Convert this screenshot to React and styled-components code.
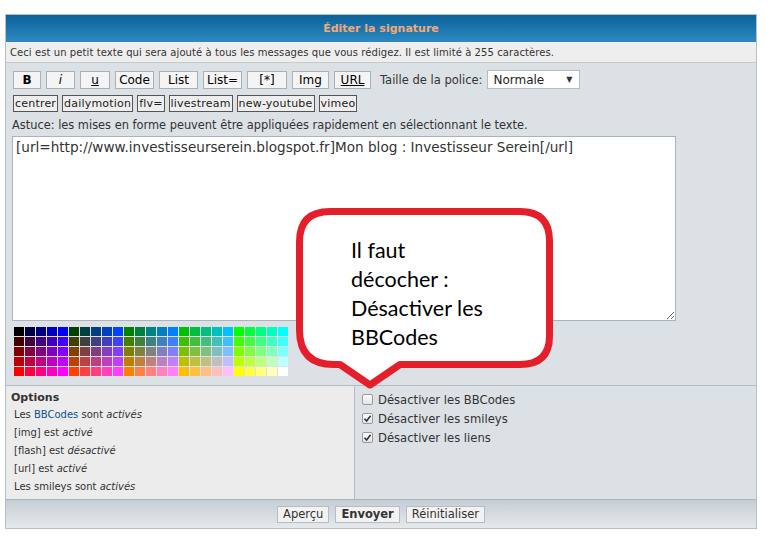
import styled, { createGlobalStyle } from "styled-components";

const GlobalStyle = createGlobalStyle`
  html, body {
    margin: 0;
    padding: 0;
    background: #fff;
  }
  body {
    font-family: "DejaVu Sans", Verdana, sans-serif;
    color: #333;
  }
`;

const LEVELS = ["00", "40", "80", "BF", "FF"];

const palette = LEVELS.map((r) =>
  LEVELS.flatMap((g) => LEVELS.map((b) => `#${r}${g}${b}`))
);

const tools = [
  { label: "B", w: 28, bold: true },
  { label: "i", w: 29, italic: true },
  { label: "u", w: 30, underline: true },
  { label: "Code", w: 39 },
  { label: "List", w: 39 },
  { label: "List=", w: 39 },
  { label: "[*]", w: 40 },
  { label: "Img", w: 37 },
  { label: "URL", w: 37, underline: true },
];

const customTags = ["centrer", "dailymotion", "flv=", "livestream", "new-youtube", "vimeo"];

const toggles = [
  { label: "Désactiver les BBCodes", checked: false },
  { label: "Désactiver les smileys", checked: true },
  { label: "Désactiver les liens", checked: true },
];

const CheckBox = ({ checked }) => (
  <Box>
    {checked && (
      <svg width="9" height="9" viewBox="0 0 9 9">
        <path d="M1.5 4.8 L3.6 7 L7.6 1.8" fill="none" stroke="#333" strokeWidth="1.6" />
      </svg>
    )}
  </Box>
);

const OptionsList = () => (
  <>
    <OptionLine>Les <Link>BBCodes</Link> sont <em>activés</em></OptionLine>
    <OptionLine>[img] est <em>activé</em></OptionLine>
    <OptionLine>[flash] est <em>désactivé</em></OptionLine>
    <OptionLine>[url] est <em>activé</em></OptionLine>
    <OptionLine>Les smileys sont <em>activés</em></OptionLine>
  </>
);

const App = () => {
  return (
    <Page>
      <GlobalStyle />
      <Panel>
        <Header>Éditer la signature</Header>
        <Desc>
          Ceci est un petit texte qui sera ajouté à tous les messages que vous rédigez. Il est limité à 255 caractères.
        </Desc>
        <Body>
          <ToolRow>
            {tools.map((t) => (
              <ToolButton key={t.label} $w={t.w} $bold={t.bold} $italic={t.italic} $underline={t.underline}>
                {t.label}
              </ToolButton>
            ))}
            <SizeLabel>Taille de la police:</SizeLabel>
            <Select>
              <span>Normale</span>
              <Arrow>▼</Arrow>
            </Select>
          </ToolRow>
          <TagRow>
            {customTags.map((t) => (
              <TagButton key={t}>{t}</TagButton>
            ))}
          </TagRow>
          <Hint>Astuce: les mises en forme peuvent être appliquées rapidement en sélectionnant le texte.</Hint>
          <TextArea
            defaultValue="[url=http://www.investisseurserein.blogspot.fr]Mon blog : Investisseur Serein[/url]"
          />
          <Palette>
            {palette.map((row, i) => (
              <PaletteRow key={i}>
                {row.map((c) => (
                  <Swatch key={c} $color={c} />
                ))}
              </PaletteRow>
            ))}
          </Palette>
        </Body>
        <OptionsArea>
          <OptionsInfo>
            <OptionsTitle>Options</OptionsTitle>
            <OptionsList />
          </OptionsInfo>
          <Toggles>
            {toggles.map((t) => (
              <ToggleRow key={t.label}>
                <CheckBox checked={t.checked} />
                {t.label}
              </ToggleRow>
            ))}
          </Toggles>
        </OptionsArea>
        <Footer>
          <FormButton>Aperçu</FormButton>
          <FormButton $primary>Envoyer</FormButton>
          <FormButton>Réinitialiser</FormButton>
        </Footer>
      </Panel>

      <Bubble>
        <svg width="270" height="185" viewBox="0 0 270 185">
          <path
            d="M34 3.5 H224 Q253.5 3.5 253.5 33 V128 Q253.5 156.5 224 156.5 H104 L74 177 L44 156.5 H38 Q3.5 156.5 3.5 122 V34 Q3.5 3.5 34 3.5 Z"
            fill="#fff"
            stroke="#e51e2b"
            strokeWidth="7"
            strokeLinejoin="round"
          />
        </svg>
        <BubbleText>
          Il faut
          <br />
          décocher :
          <br />
          Désactiver les
          <br />
          BBCodes
        </BubbleText>
      </Bubble>
    </Page>
  );
};

export default App;

const Page = styled.div`
  position: relative;
  width: 781px;
  height: 544px;
  padding: 14px 0 0 5px;
  box-sizing: border-box;
`;

const Panel = styled.div`
  width: 752px;
  box-sizing: border-box;
  border: 1px solid #b4bfc7;
  background: #dce1e5;
`;

const Header = styled.div`
  height: 27px;
  display: flex;
  align-items: center;
  justify-content: center;
  background: linear-gradient(#0a6399, #2e89c2);
  color: #f4a878;
  font-size: 11px;
  font-weight: bold;
`;

const Desc = styled.div`
  height: 20px;
  display: flex;
  align-items: center;
  padding-left: 4px;
  background: #eeeeee;
  border-bottom: 1px solid #c4ccd2;
  font-size: 10px;
  letter-spacing: 0.08px;
  color: #333;
`;

const Body = styled.div`
  padding: 7px 6px 9px 6px;
`;

const ToolRow = styled.div`
  display: flex;
  align-items: center;
  gap: 5px;
  padding-left: 1px;
`;

const ToolButton = styled.div`
  width: ${(p) => p.$w}px;
  height: 18px;
  box-sizing: border-box;
  border: 1px solid #a8b0b8;
  background: #f4f4f4;
  display: flex;
  align-items: center;
  justify-content: center;
  font-size: 12px;
  color: #000;
  font-weight: ${(p) => (p.$bold ? "bold" : "normal")};
  font-style: ${(p) => (p.$italic ? "italic" : "normal")};
  text-decoration: ${(p) => (p.$underline ? "underline" : "none")};
`;

const SizeLabel = styled.span`
  margin-left: 4px;
  font-size: 11.5px;
  color: #333;
`;

const Select = styled.div`
  width: 93px;
  height: 19px;
  box-sizing: border-box;
  border: 1px solid #b4bcc4;
  background: #fff;
  display: flex;
  align-items: center;
  justify-content: space-between;
  padding: 0 7px 0 5px;
  font-size: 12px;
  color: #222;
`;

const Arrow = styled.span`
  font-size: 8px;
  color: #333;
`;

const TagRow = styled.div`
  display: flex;
  gap: 4px;
  margin-top: 6px;
  padding-left: 1px;
`;

const TagButton = styled.div`
  height: 17px;
  box-sizing: border-box;
  border: 1px solid #555;
  background: #eeeeee;
  padding: 0 1px;
  display: flex;
  align-items: center;
  font-size: 11px;
  letter-spacing: 0.2px;
  color: #222;
`;

const Hint = styled.div`
  margin-top: 4px;
  font-size: 11.4px;
  color: #333;
  height: 18px;
  line-height: 18px;
`;

const TextArea = styled.textarea`
  display: block;
  width: 664px;
  height: 185px;
  box-sizing: border-box;
  margin: 2px 0 0 0;
  border: 1px solid #a9b4bc;
  background: #fff;
  padding: 2px 3px;
  font-family: "DejaVu Sans", Verdana, sans-serif;
  font-size: 13.6px;
  color: #333;
  resize: both;
  outline: none;
`;

const Palette = styled.div`
  display: flex;
  flex-direction: column;
  gap: 1px;
  margin: 6px 0 0 2px;
`;

const PaletteRow = styled.div`
  display: flex;
  gap: 1px;
`;

const Swatch = styled.div`
  width: 10px;
  height: 9px;
  background: ${(p) => p.$color};
`;

const OptionsArea = styled.div`
  display: grid;
  grid-template-columns: 349px 1fr;
  height: 113px;
  border-top: 1px solid #b4bcc4;
`;

const OptionsInfo = styled.div`
  background: #ececec;
  border-right: 1px solid #b4bcc4;
  padding: 5px 0 0 5px;
`;

const OptionsTitle = styled.div`
  font-size: 11px;
  font-weight: bold;
  color: #333;
  margin-bottom: 2px;
`;

const OptionLine = styled.div`
  font-size: 10px;
  color: #333;
  height: 18px;
  line-height: 18px;
  padding-left: 3px;

  & em {
    font-style: italic;
  }
`;

const Link = styled.span`
  color: #105289;
`;

const Toggles = styled.div`
  padding: 4px 0 0 7px;
`;

const ToggleRow = styled.div`
  display: flex;
  align-items: center;
  gap: 5px;
  height: 19px;
  font-size: 11.6px;
  color: #333;
`;

const Box = styled.span`
  width: 11px;
  height: 11px;
  box-sizing: border-box;
  border: 1px solid #9a9a9a;
  border-radius: 2px;
  background: linear-gradient(#fdfdfd, #e4e4e4);
  display: flex;
  align-items: center;
  justify-content: center;
`;

const Footer = styled.div`
  height: 28px;
  border-top: 1px solid #a9b4bc;
  background: linear-gradient(#c5cdd4, #e6e9ec);
  display: flex;
  align-items: center;
  justify-content: center;
  gap: 6px;
`;

const FormButton = styled.div`
  height: 17px;
  box-sizing: border-box;
  border: 1px solid #b4bcc4;
  background: #f2f2f2;
  padding: 0 5px;
  display: flex;
  align-items: center;
  font-size: 11.5px;
  color: #333;
  font-weight: ${(p) => (p.$primary ? "bold" : "normal")};
`;

const Bubble = styled.div`
  position: absolute;
  left: 296px;
  top: 208px;
  width: 270px;
  height: 185px;

  & > svg {
    position: absolute;
    left: 0;
    top: 0;
  }
`;

const BubbleText = styled.div`
  position: relative;
  padding: 28px 0 0 55px;
  font-family: Lato, "Open Sans", sans-serif;
  font-size: 21.5px;
  line-height: 29px;
  color: #000;
`;
